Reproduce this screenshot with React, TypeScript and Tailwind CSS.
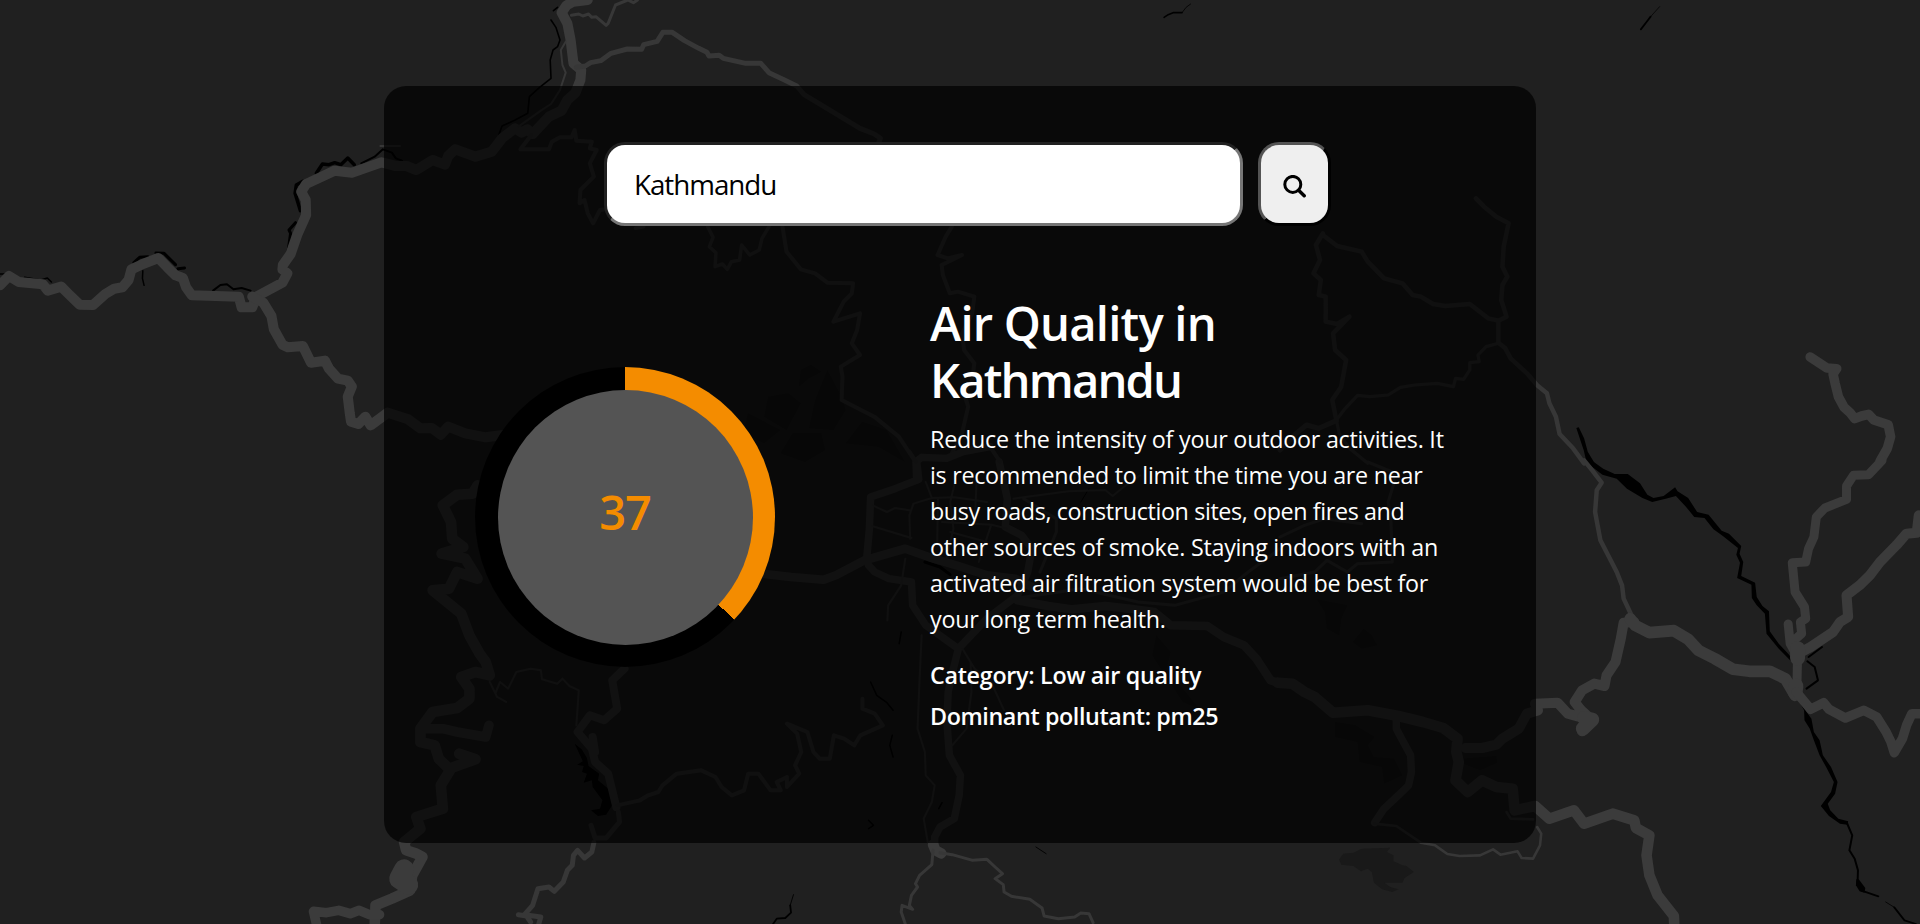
import React, { useState } from "react";

type Stroke = { d: string; w: number };
type Tile = { transform: string; roads?: Stroke[]; water?: Stroke[]; areas?: string[]; rivers?: string[] };

// The map is stored as tiles; each tile has its own local coordinate grid.
const tiles: Tile[] = [
  {
    transform: "scale(0.40816 0.33333)",
    water: [
      { w: 1.6, d: "M1356 32L1366 22M1350 60L1362 82L1372 120L1366 140L1355 150L1348 180L1350 235L1322 262L1297 290L1293 340L1262 360L1230 378L1222 405" },
      { w: 3.5, d: "M775 520L790 492L806 494L820 488L835 494L852 474L868 494" },
      { w: 3.5, d: "M736 632L728 600L723 580L726 555L742 544" },
      { w: 3, d: "M706 752L712 700L708 690L724 668" },
      { w: 2, d: "M885 490L918 470L938 448L960 458L970 475L985 482" },
      { w: 3, d: "M328 788L342 772L362 770M382 759L402 760L430 794M436 806L452 804" },
      { w: 2, d: "M522 872L540 855L556 853L572 868L592 864L614 872" },
      { w: 1.5, d: "M60 832L100 840L116 834L126 846M350 812L349 835L353 856M0 822L12 822" },
    ],
    roads: [
      { w: 9.5, d: "M0 856L22 828L46 846L105 853L117 872L150 860L168 882L195 914L228 915L258 882L280 866L300 862L315 840L322 808L350 792L388 774L410 802L430 826L448 834L456 862L470 886L585 890L592 922L618 922L628 890L692 848L704 820L692 808L693 795L712 762L728 705L750 645L749 600L738 575L750 552L820 512L862 518L935 487L970 498L996 498L1020 510L1060 480L1090 494L1098 468L1115 448L1165 470L1205 455L1230 415L1262 385L1278 398L1292 388L1305 402L1345 350L1376 332L1390 300L1410 278L1422 240L1424 210L1405 190L1398 120L1390 70L1376 38L1388 16L1405 5L1440 0" },
      { w: 9.5, d: "M618 890L645 908L665 948L671 988L692 1034L705 1042L742 1038L762 1088L796 1082L806 1106L828 1136L852 1142L862 1160L852 1190L857 1240L860 1265L878 1272L895 1250L908 1276L950 1238L975 1248L1000 1258L1030 1285L1058 1284L1080 1304L1098 1280L1140 1300L1190 1312L1232 1305" },
      { w: 3, d: "M1400 46L1418 42L1428 48L1442 42L1450 52L1460 50L1485 76L1490 70L1508 15L1538 0L1552 8L1562 0" },
      { w: 2, d: "M932 438L980 438M1386 125L1374 150L1378 195L1386 218L1372 270L1350 312L1325 332L1270 380" },
      { w: 4, d: "M1302 405L1275 448L1345 448L1352 425L1372 412L1400 412L1408 390L1412 422L1450 425L1445 445L1462 450L1445 490L1455 530L1422 570L1420 610L1432 600L1440 640L1453 670L1470 630L1500 625" },
    ],
  },
  {
    transform: "translate(560 0) scale(0.40816 0.33333)",
    areas: [
      "M590 1110L615 1095L640 1115L610 1135L585 1160Z",
      "M655 1110L690 1190L700 1230L670 1290L610 1285L625 1200Z",
      "M510 1190L560 1180L590 1210L555 1290L500 1250Z",
      "M460 1240L540 1290L500 1330L450 1300Z",
      "M570 1300L640 1300L650 1350L600 1386L540 1360Z",
      "M740 1265L800 1290L845 1386L780 1340L700 1330Z",
    ],
    water: [
      { w: 1.6, d: "M1480 52L1490 44L1502 38L1524 38" },
      { w: 0.8, d: "M1524 38L1534 22L1545 12" },
    ],
    roads: [
      { w: 5, d: "M40 202L62 198L75 188L100 182L125 160L165 147L200 148L205 134L238 124L252 97L275 97L305 122L340 145L360 157L365 168L390 166L400 175L455 190L492 190L512 218L550 240L580 258L598 284L650 322L735 385L770 402L785 415L780 430" },
      { w: 3.5, d: "M362 680L375 712L366 740L382 758L380 800L398 792L410 808L420 785L440 780L445 735L465 765L488 750L495 715L512 680M185 685L205 680" },
      { w: 4, d: "M545 680L555 755L590 808L625 820L655 848L718 850L715 880L695 905L670 965L735 940L728 990L715 1030L735 1065L688 1100L692 1130L690 1200L770 1250L830 1310L868 1380" },
      { w: 4, d: "M960 680L945 710L925 765L950 775L985 765L935 795L938 825L955 880L975 875L1015 890L1010 940L985 1000L990 1050L1015 1090L1010 1140L990 1180L1000 1220L985 1300L960 1360" },
    ],
  },
  {
    transform: "translate(1280 0) scale(0.40816 0.33333)",
    water: [
      { w: 1.8, d: "M884 88L898 66L908 50" },
      { w: 0.7, d: "M908 50L930 20" },
    ],
    rivers: ["M726 1284L732 1282L745 1315L754 1355L772 1392L752 1392L744 1350Z"],
    roads: [
      { w: 9, d: "M1299 1071L1325 1092L1340 1104L1364 1106L1355 1122L1360 1150L1368 1190L1382 1222L1398 1240L1408 1256L1425 1248L1442 1243L1455 1260L1490 1274L1496 1310L1488 1345L1470 1384" },
      { w: 4.5, d: "M105 700L88 735L98 780L82 820L100 840L95 885L112 890L112 965L140 972L170 950L130 1000L135 1050L162 1080L150 1160L128 1200L138 1260M105 705L140 738L200 755L215 785L255 835L300 850L325 885L345 890L375 912L405 918L465 912L510 955L535 962L555 950L542 900L545 855L557 830L545 800L548 740L560 670L530 650L500 620L480 595" },
      { w: 4.5, d: "M535 965L535 1028L552 1045L565 1075L605 1120L630 1156L654 1180L660 1210L676 1250L685 1302L718 1345L745 1390" },
      { w: 3.2, d: "M535 1030L505 1040L485 1065L488 1085L465 1088L465 1110L450 1138L430 1135L425 1160L385 1150L330 1155L295 1162L265 1185L220 1190L190 1186L160 1225L138 1260L145 1300L170 1345L215 1390" },
      { w: 5, d: "M138 1262L95 1285L65 1275L40 1300L0 1350" },
    ],
  },
  {
    transform: "translate(0 462) scale(0.40816 0.33333)",
    rivers: [
      "M1408 845L1425 862L1438 888L1442 912L1468 935L1465 955L1500 990L1502 1025L1485 1058L1465 1062L1448 1045L1470 1040L1476 1015L1452 975L1450 955L1430 962L1438 935L1426 930L1430 912L1414 908L1428 898Z",
    ],
    roads: [
      { w: 10, d: "M1170 70L1158 95L1120 98L1085 130L1105 180L1108 230L1135 255L1082 275L1140 290L1170 350L1120 330L1100 380L1060 385L1100 425L1130 455L1150 520L1175 575L1190 600L1200 640L1165 630L1130 645L1150 680L1150 710L1120 738L1060 750L1030 800L1030 840L1065 850L1075 890L1100 920L1165 892L1125 875M1105 920L1080 970L1085 1040L1020 1065L1030 1100L990 1140L995 1165L1020 1175L1035 1185L1010 1240L1005 1285L960 1310L920 1330L918 1390" },
      { w: 20, d: "M990 1222L978 1250L1000 1268" },
      { w: 9, d: "M930 1358L905 1358L880 1345L858 1355L830 1345L800 1352L768 1348L776 1390M1040 800L1085 800L1120 810L1190 825L1198 790" },
      { w: 2, d: "M1200 660L1218 705L1240 720M1215 690L1225 660L1245 680L1265 630L1300 620L1325 625L1328 652L1365 665L1378 650L1395 672L1418 685L1415 740L1412 790" },
      { w: 7.5, d: "M1530 620L1500 655L1512 740L1480 775L1445 760L1415 810L1450 860L1458 900L1490 935L1500 985L1510 1035M1452 825L1458 870" },
      { w: 5, d: "M1515 1050L1518 1080L1485 1128L1458 1128L1448 1090M1455 1142L1450 1170L1432 1188L1415 1165L1405 1180L1402 1210L1390 1225L1380 1260L1358 1288L1345 1275L1318 1280L1305 1330L1285 1358L1325 1365L1320 1386M1270 1358L1290 1362L1300 1380" },
      { w: 4, d: "M1512 1030L1568 1015" },
    ],
  },
  {
    transform: "translate(640 462) scale(0.40816 0.33333)",
    areas: ["M1265 520L1300 570L1290 620L1370 740L1330 720L1255 580Z"],
    water: [
      { w: 1.8, d: "M368 1330L370 1352L356 1368L335 1370L326 1386" },
      { w: 0.9, d: "M376 1298L368 1330M970 1155L995 1175M1080 120L1100 80" },
      { w: 1.5, d: "M565 660L580 700L605 722L620 745M618 820L612 850L620 885M640 510L635 545M740 1022L732 1040M560 1075L572 1090L560 1100" },
      { w: 3, d: "M698 300L735 315L760 338" },
    ],
    roads: [
      { w: 8, d: "M300 335L370 345L450 353L480 340L550 295L650 260L720 290L780 312L850 340L920 350L960 375M925 415L1000 432L1060 442L1140 432L1200 440L1260 450L1300 490L1390 492L1430 525L1480 550L1510 590L1545 655L1568 665" },
      { w: 7, d: "M555 295L562 200L565 105L625 80L683 52L678 0M560 310L575 330L610 350L665 360L668 430L700 490L780 560L768 620L755 690L752 780L758 880L785 940L782 1000L770 1070L735 1095L722 1125L722 1160M780 560L850 470L925 400L950 330L960 260L935 220L895 195L900 110L880 0" },
      { w: 2, d: "M650 290L640 370L608 430L606 475M690 520L685 650L680 800L698 870L700 940L722 970L715 1020L695 1070L705 1140M790 560L820 620L860 660L892 745M810 600L812 690L800 800L765 850M570 130L605 150L625 138L660 145M568 192L665 228M662 230L660 160L670 125L715 108L700 60M715 108L770 106L850 120M740 180L862 188L900 200M770 70L760 120L768 200L750 290M730 110L728 250M825 50L820 180M860 190L830 300M915 110L1050 88L1140 84L1158 102L1185 75L1225 40M760 210L850 240" },
      { w: 3, d: "M915 410L1080 380L1220 420L1310 430L1430 390L1490 330L1568 260M940 110L1020 170L1020 210L980 330" },
      { w: 4, d: "M0 1015L20 1000L45 990L55 970L90 935L150 925L185 945L200 975L225 1000L255 985L265 935L290 935L320 985L345 985L335 960L360 945L360 975L390 935L380 910L395 870L385 815L360 785L410 810L425 870L440 890L465 890L475 820L500 830L525 850L540 820L595 790L575 755L545 740L545 710" },
      { w: 10, d: "M718 1148L724 1165L738 1174" },
      { w: 3, d: "M735 1172L765 1178L815 1195L850 1192L870 1215L888 1235L870 1250L890 1268L892 1290L910 1303L955 1312L985 1338L990 1362L1025 1370L1065 1365L1080 1353L1100 1355L1110 1382M718 1165L715 1208L685 1240L675 1265L680 1275L665 1300L660 1330L668 1342L642 1330L640 1350L650 1386" },
    ],
  },
  {
    transform: "translate(1280 462) scale(0.40816 0.33333)",
    areas: [
      "M145 1192L155 1175L180 1172L200 1160L270 1157L262 1170L278 1180L278 1198L300 1210L310 1212L328 1230L305 1248L300 1262L256 1262L270 1275L290 1282L275 1290L250 1282L230 1262L225 1230L215 1220L198 1228L180 1212L150 1208Z",
      "M445 890L530 882L532 902L490 925L450 905Z",
      "M135 780L185 790L232 825L215 850L230 885L280 890L300 940L255 965L250 915L195 900L190 840L135 825Z",
      "M90 412L165 430L150 470L145 520L115 500L110 450Z",
      "M205 500L225 520L238 550L200 560L178 540Z",
    ],
    water: [
      { w: 2, d: "M1328 555L1295 585M1292 598L1310 615L1318 655L1290 680" },
      { w: 2, d: "M1388 1080L1402 1120L1395 1165L1408 1190L1416 1225L1415 1262" },
      { w: 1.8, d: "M1425 1286L1466 1303M1505 1336L1530 1375L1558 1386" },
      { w: 0.8, d: "M1484 1320L1505 1336" },
    ],
    rivers: [
      "M745 -6L762 -6L792 20L820 36L852 36L882 64L900 98L915 108L940 102L968 76L974 88L1000 108L1022 150L1050 158L1082 206L1100 215L1130 252L1126 275L1135 300L1130 342L1164 362L1168 405L1182 432L1198 448L1200 508L1222 545L1245 575L1260 598L1254 600L1222 560L1192 515L1188 455L1168 430L1156 408L1155 368L1120 348L1127 302L1118 278L1122 258L1085 222L1062 202L1040 168L1015 165L995 135L970 102L945 110L912 120L888 108L850 80L825 50L790 38L765 15Z",
      "M1266 706L1275 708L1290 750L1302 770L1308 810L1322 835L1330 880L1350 915L1366 960L1360 995L1342 1025L1348 1045L1368 1070L1392 1078L1390 1088L1372 1085L1345 1062L1325 1032L1350 990L1357 960L1338 915L1322 880L1308 835L1298 800L1285 775L1284 745Z",
      "M1412 1252L1418 1252L1434 1278L1432 1292L1420 1288L1411 1270Z",
    ],
    roads: [
      { w: 4.5, d: "M745 -5L765 25L788 62L776 85L772 150L785 235L802 275L825 330L838 370L842 410L862 462" },
      { w: 9.5, d: "M868 480L842 482L835 530L822 600L800 640L795 672L770 665L740 685L722 720L738 745L765 775L740 808M625 725L680 722L705 755L765 775M632 745L605 755L585 800L545 830L530 848L495 858L455 858" },
      { w: 14, d: "M745 768L765 773L742 800" },
      { w: 11, d: "M858 470L870 490L905 512L965 506L1000 532L1025 565L1065 590L1110 622L1150 628L1200 628L1238 650L1262 700" },
      { w: 8.5, d: "M1475 -5L1442 38L1405 40L1388 72L1388 112L1335 138L1314 165L1308 225L1295 260L1288 300L1255 302L1262 390L1285 435L1288 470L1275 480L1278 515L1250 545M1245 486L1250 545L1268 585L1266 700" },
      { w: 9.5, d: "M1270 575L1300 555L1355 510L1372 480L1392 465L1388 400L1420 370L1445 340L1470 300L1510 250L1535 215L1560 212L1565 160" },
      { w: 15, d: "M1268 560L1268 588M1264 672L1262 690" },
      { w: 9, d: "M1265 690L1300 742L1332 722L1345 742L1385 768L1430 745L1462 765L1485 810L1497 840L1505 872L1525 830L1535 790L1548 755L1572 755" },
      { w: 10, d: "M-5 662L30 665L60 690L85 705L130 752L215 745L290 762L350 780L400 798L435 830L432 870L438 900L430 955L460 990L495 955L530 975L570 980L575 1045L625 1032L660 1070L720 1045L745 1085L815 1055L868 1075L872 1098L905 1120L898 1180L905 1240L925 1300L965 1362L966 1392" },
      { w: 7, d: "M285 770L285 800L300 835L320 880L322 930L315 970L290 1000L255 1040L232 1082" },
      { w: 2.6, d: "M230 1085L285 1092L345 1142L380 1150L410 1176L440 1182L490 1180L522 1162L540 1178L582 1168L592 1188L620 1190L637 1150L640 1115L630 1095M555 1050L565 1070L620 1072" },
      { w: 3, d: "M215 0L275 30L280 60L265 120L272 180L275 300L190 305L165 330L115 295L85 330L0 350M0 225L60 190L110 170L200 185" },
    ],
  },
  {
    transform: "translate(760 380) scale(0.33333)",
    roads: [
      { w: 7, d: "M470 300L468 245L485 232L560 235L610 215L690 200" },
      { w: 4, d: "M448 215L468 245M690 200L720 245" },
    ],
  },
];

function StreetMap() {
  return (
    <svg className="absolute inset-0 h-full w-full" viewBox="0 0 1920 924" preserveAspectRatio="none" aria-hidden="true">
      {tiles.map((tile, i) => (
        <g key={i} transform={tile.transform} fill="none" strokeLinecap="round" strokeLinejoin="round">
          {tile.areas?.map((d, j) => (
            <path key={j} d={d} fill="#191919" />
          ))}
          {tile.rivers?.map((d, j) => (
            <path key={j} d={d} fill="#000000" />
          ))}
          {tile.water?.map((s, j) => (
            <path key={j} d={s.d} stroke="#000000" strokeWidth={s.w} vectorEffect="non-scaling-stroke" />
          ))}
          {tile.roads?.map((s, j) => (
            <path
              key={j}
              d={s.d}
              stroke={s.w < 7 ? "#373737" : "#3b3b3b"}
              strokeWidth={s.w >= 7 && s.w < 12 ? s.w * 1.06 : s.w}
              vectorEffect="non-scaling-stroke"
            />
          ))}
        </g>
      ))}
    </svg>
  );
}

function SearchBar() {
  const [city, setCity] = useState("Kathmandu");
  return (
    <form className="ml-[220px] flex gap-[15px]" onSubmit={(e) => e.preventDefault()}>
      <input
        aria-label="City"
        value={city}
        onChange={(e) => setCity(e.target.value)}
        className="h-[84px] w-[639px] rounded-[21px] border-[3px] border-[#767676] bg-white pl-[27px] text-[27.8px] tracking-[-1.05px] text-black outline-none [border-style:inset]"
      />
      <button
        type="submit"
        aria-label="Search"
        className="flex h-[84px] w-[73px] items-center justify-center rounded-[21px] border-[3px] border-black bg-[#efefef] [border-style:outset]"
      >
        <svg className="h-[23px] w-[23px] translate-y-[2px]" viewBox="0 0 23 23" fill="none" stroke="#000" aria-hidden="true">
          <circle cx="9.8" cy="9.4" r="8" strokeWidth="3" />
          <path d="M15.6 15.2L21.2 20.8" strokeWidth="3.4" strokeLinecap="round" />
        </svg>
      </button>
    </form>
  );
}

function Gauge({ value }: { value: number }) {
  return (
    <div
      className="flex h-[300px] w-[300px] shrink-0 items-center justify-center rounded-full"
      style={{ background: `conic-gradient(#f48c00 ${value}%, #000 0)` }}
    >
      <div className="flex h-[255px] w-[255px] items-center justify-center rounded-full bg-[#545454] pb-[9px] text-[47px] leading-none font-semibold tracking-[-1px] text-[#f48c00]">
        {value}
      </div>
    </div>
  );
}

export default function App() {
  return (
    <main className="relative flex h-screen items-start justify-center overflow-hidden bg-[#202020] pt-[86px] font-['Open_Sans','Noto_Sans',sans-serif]">
      <StreetMap />
      <section className="relative h-[757px] w-3/5 rounded-[22px] bg-black/70 pt-14 text-white">
        <SearchBar />
        <div className="mt-[67px] flex pl-[91px]">
          <div className="pt-[74px]">
            <Gauge value={37} />
          </div>
          <div className="ml-[155px] pt-[2px] whitespace-nowrap">
            <h1 className="text-[47.2px] leading-[57px] font-semibold">
              <span className="block tracking-[-0.8px]">Air Quality in</span>
              <span className="block tracking-[-1.85px]">Kathmandu</span>
            </h1>
            <p className="mt-3 text-[23.3px] leading-9 tracking-[-0.24px]">
              <span className="block">Reduce the intensity of your outdoor activities. It</span>
              <span className="block tracking-[-0.28px]">is recommended to limit the time you are near</span>
              <span className="block tracking-[-0.38px]">busy roads, construction sites, open fires and</span>
              <span className="block tracking-[-0.28px]">other sources of smoke. Staying indoors with an</span>
              <span className="block tracking-[-0.26px]">activated air filtration system would be best for</span>
              <span className="block tracking-[-0.28px]">your long term health.</span>
            </p>
            <p className="mt-5 text-[23.3px] leading-9 font-semibold tracking-[-0.29px]">Category: Low air quality</p>
            <p className="mt-[5px] text-[23.3px] leading-9 font-semibold tracking-[-0.39px]">Dominant pollutant: pm25</p>
          </div>
        </div>
      </section>
    </main>
  );
}
